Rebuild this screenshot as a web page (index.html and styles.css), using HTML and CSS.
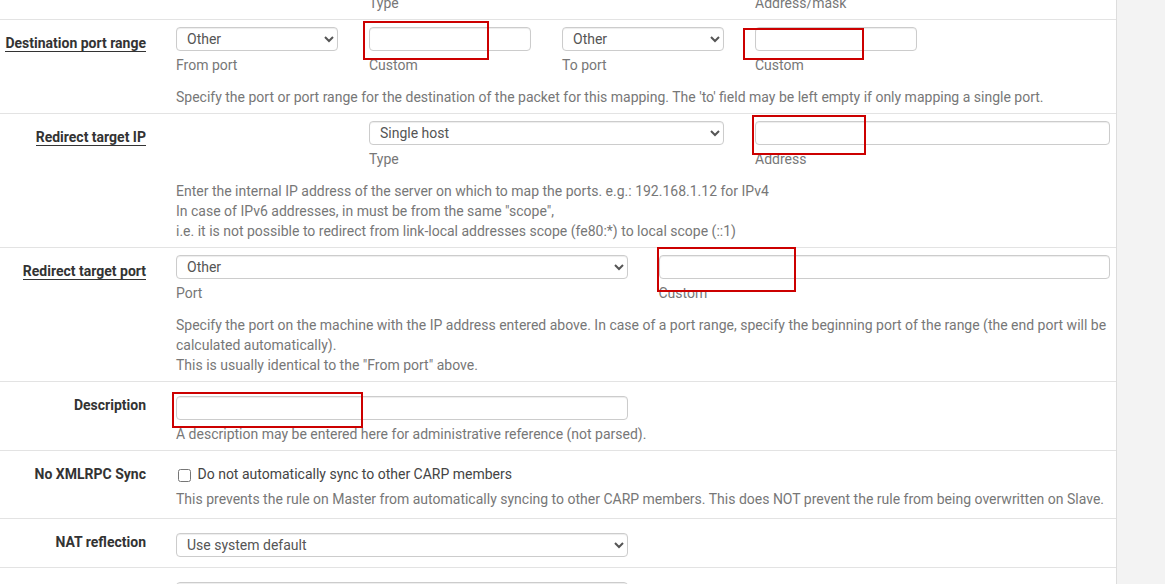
FILE: index.html
```html
<!DOCTYPE html>
<html lang="en">
<head>
    <meta charset="UTF-8">
    <meta name="viewport" content="width=device-width, initial-scale=1.0">
    <title>Firewall: NAT: Port Forward: Edit</title>
    <link rel="stylesheet" href="styles.css">
</head>
<body>
    <div class="panel">
        <!-- tail of the destination row above -->
        <div class="form-row tail">
            <div class="lbl"></div>
            <div class="body">
                <div class="fields">
                    <div class="col col-2"></div>
                    <div class="col col-2"><span class="sub">Type</span></div>
                    <div class="col col-2"></div>
                    <div class="col col-2"><span class="sub">Address/mask</span></div>
                </div>
            </div>
        </div>

        <div class="form-row">
            <div class="lbl"><span class="req">Destination port range</span></div>
            <div class="body">
                <div class="fields">
                    <div class="col col-2">
                        <select class="ctl"><option>Other</option></select>
                        <span class="sub">From port</span>
                    </div>
                    <div class="col col-2">
                        <input type="text" class="ctl">
                        <span class="sub">Custom</span>
                    </div>
                    <div class="col col-2">
                        <select class="ctl"><option>Other</option></select>
                        <span class="sub">To port</span>
                    </div>
                    <div class="col col-2">
                        <input type="text" class="ctl">
                        <span class="sub">Custom</span>
                    </div>
                </div>
                <div class="help">Specify the port or port range for the destination of the packet for this mapping. The 'to' field may be left empty if only mapping a single port.</div>
            </div>
        </div>

        <div class="form-row">
            <div class="lbl"><span class="req">Redirect target IP</span></div>
            <div class="body">
                <div class="fields">
                    <div class="col col-2"></div>
                    <div class="col col-4">
                        <select class="ctl"><option>Single host</option></select>
                        <span class="sub">Type</span>
                    </div>
                    <div class="col col-4">
                        <input type="text" class="ctl">
                        <span class="sub">Address</span>
                    </div>
                </div>
                <div class="help">
                    Enter the internal IP address of the server on which to map the ports. e.g.: 192.168.1.12 for IPv4<br>
                    In case of IPv6 addresses, in must be from the same "scope",<br>
                    i.e. it is not possible to redirect from link-local addresses scope (fe80:*) to local scope (::1)
                </div>
            </div>
        </div>

        <div class="form-row">
            <div class="lbl"><span class="req">Redirect target port</span></div>
            <div class="body">
                <div class="fields">
                    <div class="col col-5">
                        <select class="ctl"><option>Other</option></select>
                        <span class="sub">Port</span>
                    </div>
                    <div class="col col-5">
                        <input type="text" class="ctl">
                        <span class="sub">Custom</span>
                    </div>
                </div>
                <div class="help">
                    Specify the port on the machine with the IP address entered above. In case of a port range, specify the beginning port of the range (the end port will be calculated automatically).<br>
                    This is usually identical to the "From port" above.
                </div>
            </div>
        </div>

        <div class="form-row">
            <div class="lbl">Description</div>
            <div class="body loose">
                <div class="fields">
                    <div class="col col-5"><input type="text" class="ctl"></div>
                </div>
                <div class="help near">A description may be entered here for administrative reference (not parsed).</div>
            </div>
        </div>

        <div class="form-row">
            <div class="lbl">No XMLRPC Sync</div>
            <div class="body check-body">
                <div class="fields">
                    <label class="col col-10 check">
                        <input type="checkbox">
                        <span>Do not automatically sync to other CARP members</span>
                    </label>
                </div>
                <div class="help check-help">This prevents the rule on Master from automatically syncing to other CARP members. This does NOT prevent the rule from being overwritten on Slave.</div>
            </div>
        </div>

        <div class="form-row">
            <div class="lbl">NAT reflection</div>
            <div class="body loose last">
                <div class="fields">
                    <div class="col col-5">
                        <select class="ctl"><option>Use system default</option></select>
                    </div>
                </div>
            </div>
        </div>

        <div class="form-row">
            <div class="lbl"></div>
            <div class="body loose">
                <div class="fields">
                    <div class="col col-5">
                        <select class="ctl"><option></option></select>
                    </div>
                </div>
            </div>
        </div>

        <!-- red annotation boxes -->
        <div class="mark mark-1"></div>
        <div class="mark mark-2"></div>
        <div class="mark mark-3"></div>
        <div class="mark mark-4"></div>
        <div class="mark mark-5"></div>
    </div>
</body>
</html>
```

FILE: styles.css
```css
:root {
    --text: #333;
    --muted: #777;
    --line: #e3e3e3;
    --field-border: #ccc;
    --mark: #cc0000;
    --bg: #f3f3f3;
}
html, body {
    margin: 0;
    height: 100%;
    overflow: hidden;
}
body {
    font-family: Roboto, 'Liberation Sans', sans-serif;
    font-size: 14px;
    line-height: 20px;
    color: var(--text);
    background-color: var(--bg);
}
.panel {
    position: relative;
    width: 1116px;
    height: 100%;
    background: #fff;
    border-right: 1px solid #ddd;
    overflow: hidden;
}
.form-row {
    display: flex;
}
.form-row + .form-row {
    border-top: 1px solid var(--line);
}
.tail {
    margin-top: -7px;
}
.tail .body {
    padding: 0 0 6px;
}
.tail .sub {
    margin-top: 0;
}
.tail .lbl {
    padding-top: 0;
}
.lbl {
    flex: none;
    width: 160.5px;
    box-sizing: border-box;
    padding: 13px 14.5px 0 0;
    text-align: right;
    font-weight: 700;
}
.req {
    border-bottom: 1px solid var(--text);
}
.body {
    flex: none;
    width: 965px;
    padding: 7px 0 6px;
}
.body.loose {
    padding-top: 14px;
}
.body.last {
    padding-bottom: 10px;
}
.fields {
    display: flex;
}
.col {
    flex: none;
    box-sizing: border-box;
    padding: 0 15.5px;
}
.col-2 { width: 193px; }
.col-4 { width: 386px; }
.col-5 { width: 482.5px; }
.col-10 { width: 965px; }
.ctl {
    display: block;
    width: 100%;
    height: 24px;
    box-sizing: border-box;
    margin: 0;
    padding: 0 10px;
    font-family: inherit;
    font-size: 14px;
    color: #555;
    background-color: #fff;
    border: 1px solid var(--field-border);
    border-radius: 4px;
    box-shadow: inset 0 1px 1px rgba(0, 0, 0, 0.075);
}
select.ctl {
    padding-left: 6px;
}
.sub {
    display: block;
    margin-top: 4px;
    color: var(--muted);
}
.help {
    margin-top: 12px;
    padding: 0 15.5px;
    color: var(--muted);
}
.help.near {
    margin-top: 4px;
}
.check-body {
    padding: 13px 0 9px;
}
.check {
    display: flex;
    align-items: center;
    color: #444;
}
.check input {
    width: 13px;
    height: 13px;
    margin: 3px 7px 0 1.5px;
}
.help.check-help {
    margin-top: 5px;
}
.mark {
    position: absolute;
    box-sizing: border-box;
    border: 2px solid var(--mark);
}
.mark-1 { left: 363px; top: 21px; width: 126px; height: 39px; }
.mark-2 { left: 743px; top: 28px; width: 121px; height: 32px; }
.mark-3 { left: 752px; top: 115px; width: 114px; height: 40px; }
.mark-4 { left: 657px; top: 247px; width: 139px; height: 45px; }
.mark-5 { left: 172px; top: 392px; width: 191px; height: 36px; }
```
